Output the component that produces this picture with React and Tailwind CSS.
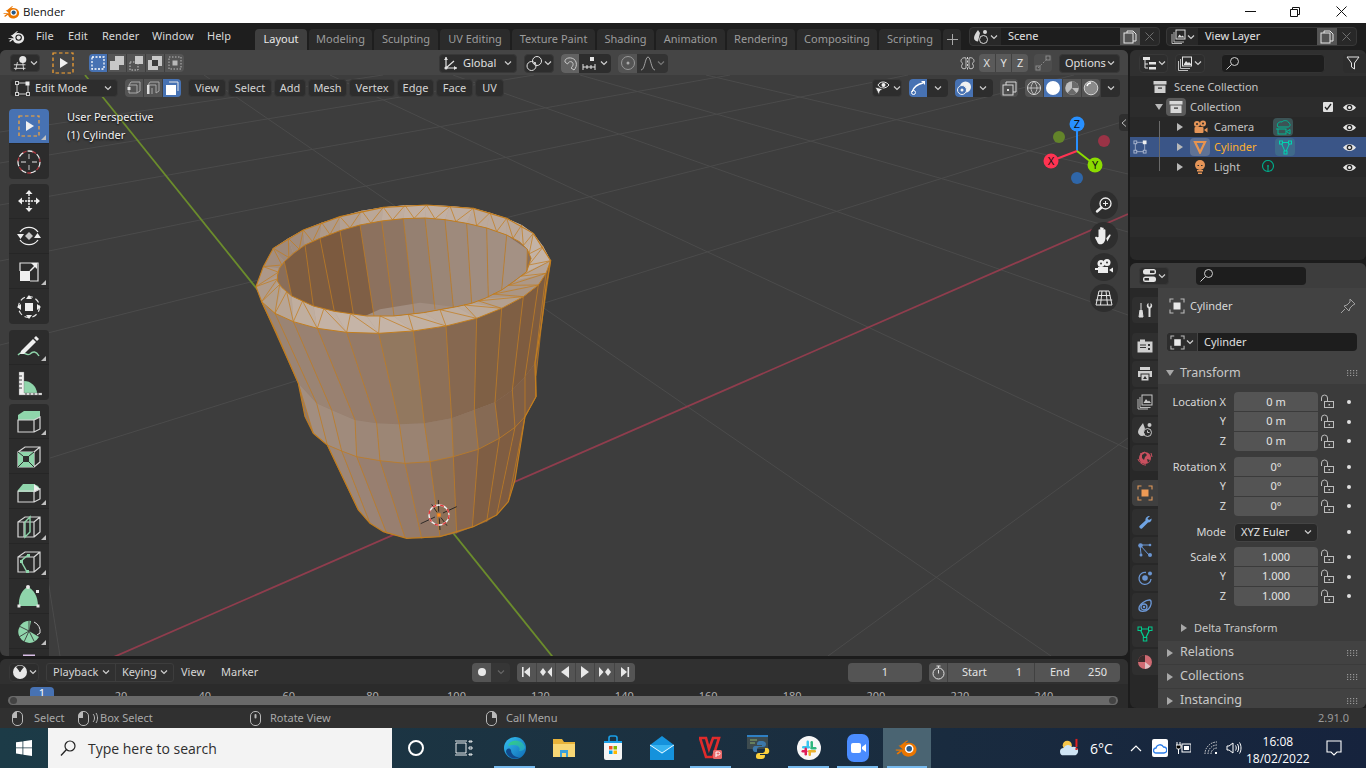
import React from "react";

const Chev = ({ c = "#cfcfcf" }) => (
  <svg width="8" height="8" viewBox="0 0 8 8"><path d="M1 2.5L4 5.5L7 2.5" stroke={c} strokeWidth="1.2" fill="none" /></svg>
);
const I = ({ s = 16, v = 16, children, className = "" }) => (
  <svg width={s} height={s} viewBox={`0 0 ${v} ${v}`} fill="none" className={className}>{children}</svg>
);
const W = "#e4e4e4";

const BlenderLogo = ({ s = 18, c = "#ea7600", blue = "#265787", mono = false }) => (
  <svg width={s} height={s} viewBox="0 0 24 24">
    <path d="M1 13.5l7 0L3.5 9.5h1.8L11 5c1.2-.9 2.6-.7 2-.1L10 7.2c4-1.2 9-.6 11 3.8 1.7 4-.8 8.7-6 9.6-4.200.7-7.700-1.500-8.300-5L3.500 18c-1.400.9-2.400-.5-1.200-1.300L5 14.800 1.700 14.800C.5 14.800.3 13.500 1 13.500z" fill={c} />
    <circle cx="14.2" cy="12.800" r="4.300" fill={mono ? "#1d1d1d" : "#fff"} />
    <circle cx="14.200" cy="12.800" r="2.800" fill={mono ? "#e6e6e6" : blue} />
  </svg>
);

const SelectTool = () => (
  <I s={22} v={22}>
    <rect x="1" y="1" width="20" height="20" stroke="#ffa733" strokeWidth="1.200" strokeDasharray="3.500 2.500" />
    <path d="M8 6v10l8-5z" fill="#f0f0f0" />
  </I>
);
const SelMode = ({ k }) => (
  <I s={16} v={16}>
    {k === 0 && <rect x="2" y="2" width="12" height="12" stroke="#fff" strokeWidth="1.300" strokeDasharray="2 1.500" />}
    {k === 1 && <><rect x="6" y="1" width="9" height="9" fill="#c8c8c8" /><rect x="1" y="6" width="9" height="9" fill="#c8c8c8" /></>}
    {k === 2 && <><rect x="7" y="1" width="8" height="8" fill="#c8c8c8" /><rect x="2" y="7" width="8" height="8" stroke="#c8c8c8" strokeDasharray="1.500 1.500" /></>}
    {k === 3 && <><path d="M5 1h10v10H5zM1 5h10v10H1z" fill="#c8c8c8" /><rect x="5" y="5" width="6" height="6" fill="#3b3b3b" /></>}
    {k === 4 && <><rect x="2" y="2" width="12" height="12" stroke="#b8b8b8" strokeDasharray="1.500 1.500" /><rect x="5.500" y="5.500" width="5" height="5" fill="#b8b8b8" /></>}
  </I>
);
const EditModeIcon = () => (
  <I s={15} v={15}>
    <path d="M2 2h11v11H2z" stroke="#cfcfcf" />
    <g fill="#2b2b2b" stroke="#cfcfcf"><rect x="0.500" y="0.500" width="3" height="3" /><rect x="0.500" y="11.500" width="3" height="3" /><rect x="11.500" y="11.500" width="3" height="3" /></g>
    <rect x="10.500" y="0.500" width="4" height="4" fill="#eee" />
  </I>
);
const MeshMode = ({ k }) => (
  <I s={16} v={16}>
    {k === 0 && <><path d="M3 5h8v8H3zM3 5l2-3h9v9l-3 2" stroke="#a8a8a8" /><rect x="1.500" y="7" width="3" height="3" fill="#ddd" /></>}
    {k === 1 && <><path d="M3 5h8v8M3 5l2-3h9v9l-3 2" stroke="#a8a8a8" /><rect x="2" y="5" width="2.500" height="9" fill="#ddd" /><path d="M7 8v6" stroke="#a8a8a8" /></>}
    {k === 2 && <><path d="M5 2h9v9" stroke="#e8e8e8" /><rect x="2" y="5" width="10" height="10" fill="#fff" /></>}
  </I>
);
const GlobalIcon = () => (
  <I s={15} v={15}><path d="M3 1v11h11M3 12l8-7" stroke={W} strokeWidth="1.200" /><circle cx="3" cy="12" r="1.600" fill={W} /><path d="M3 1L1 4h4zM14 12l-3-2v4z" fill={W} /></I>
);
const PivotIcon = () => (
  <I s={17} v={17}><circle cx="5.500" cy="11" r="4.500" stroke={W} /><circle cx="11" cy="6" r="4.500" stroke={W} /><circle cx="9" cy="8" r="1" fill={W} /></I>
);
const MagnetIcon = () => (
  <I s={16} v={16}><path d="M3 7c-1-5 9-6 11 0 1 3 0 6-2 8l-3-2c2-2 3-4 1-6-2-1-3.500 0-4.500 2z" stroke="#c9c9c9" /></I>
);
const SnapIncr = () => (
  <I s={16} v={16}><path d="M1 9v6M5 10v4M9 10v4M13 9v6M1 12h12" stroke={W} /><rect x="8" y="2" width="4" height="4" fill={W} /></I>
);
const PropIcon = () => (
  <I s={16} v={16}><circle cx="8" cy="8" r="6.500" stroke="#999" /><circle cx="8" cy="8" r="1.500" fill="#aaa" /></I>
);
const FalloffIcon = () => (
  <I s={16} v={16}><path d="M1 15c4 0 4-13 7-13s3 13 7 13" stroke="#a0a0a0" /></I>
);
const MirrorIcon = () => (
  <I s={15} v={15}>
    <path d="M7.500 1v13" stroke="#d0d0d0" strokeDasharray="2 1.500" />
    <path d="M6 2C3 1 1 3 1 5c0 1 1 2 2 2.500C2 8 1 10 2 12c1 1 3 1 4 0zM9 2c3-1 5 1 5 3 0 1-1 2-2 2.500 1 .5 2 2.500 1 4.500-1 1-3 1-4 0z" stroke="#d0d0d0" strokeWidth=".9" />
  </I>
);
const SnapBox = () => (
  <I s={16} v={16}><path d="M3 13L13 3" stroke="#8a8a8a" strokeDasharray="2 1.500" /><rect x="1" y="11" width="4" height="4" stroke="#8a8a8a" /><rect x="11" y="1" width="4" height="4" stroke="#8a8a8a" /></I>
);
const VisIcon = () => (
  <I s={18} v={18}>
    <path d="M4 6c2-4 8-4 11 0-3 4-9 4-11 0z" stroke="#efefef" />
    <circle cx="9.500" cy="6" r="2" fill="#efefef" />
    <path d="M1 8l8 2-3 2-1 4z" fill="#efefef" stroke="#2b2b2b" strokeWidth=".8" />
  </I>
);
const GizmoIcon = () => (
  <I s={16} v={16}><path d="M2 12C4 6 8 4 13 3" stroke="#fff" strokeWidth="1.300" /><circle cx="3.500" cy="12.500" r="2" stroke="#fff" /><path d="M11 1h4v4z" fill="#fff" /></I>
);
const OverlayIcon = () => (
  <I s={16} v={16}><circle cx="9.500" cy="7" r="5.500" fill="#f2f2f2" /><circle cx="6" cy="10" r="4.500" stroke="#f2f2f2" fill="#4772b3" /><circle cx="6" cy="10" r="1.500" fill="#f2f2f2" /></I>
);
const XrayIcon = () => (
  <I s={15} v={15}><path d="M4 4V1h10v10h-3" stroke="#d8d8d8" /><rect x="1" y="4" width="10" height="10" stroke="#d8d8d8" /><rect x="5" y="8" width="2" height="2" fill="#d8d8d8" /></I>
);
const ShadeIcon = ({ k }) => (
  <I s={16} v={16}>
    {k === 0 && <><circle cx="8" cy="8" r="6.500" stroke="#d5d5d5" /><path d="M1.500 8h13M8 1.500c-4 4-4 9 0 13M8 1.500c4 4 4 9 0 13" stroke="#d5d5d5" strokeWidth=".8" /></>}
    {k === 1 && <circle cx="8" cy="8" r="7" fill="#fff" />}
    {k === 2 && <><circle cx="8" cy="8" r="6.800" fill="#bdbdbd" /><path d="M8 8V1.200a6.800 6.800 0 0 1 6.800 6.800zM8 8l4.500 5a6.800 6.800 0 0 1-9 0z" fill="#6a6a6a" /></>}
    {k === 3 && <><circle cx="8" cy="8" r="6.800" fill="#8a8a8a" stroke="#d5d5d5" /><path d="M4 6a4 4 0 0 1 4-3" stroke="#fff" strokeWidth="1.400" /></>}
  </I>
);

/* toolbar icons */
const G = "#8fd5ab";
const boxPath = "M2 9h16v15H2zM2 9l7-5h15v15l-6 5M18 9l6-5";
const ToolIcon = ({ k }) => {
  const st = { stroke: "#d8d8d8", strokeWidth: 1.200 };
  return (
    <I s={26} v={26}>
      {k === "cursor" && <>
        <circle cx="13" cy="13" r="11" stroke="#e8e8e8" strokeWidth="1.300" strokeDasharray="6 4" />
        <circle cx="13" cy="13" r="11" stroke="#b03a42" strokeWidth="1.300" strokeDasharray="4 6" strokeDashoffset="5" />
        <path d="M13 5v5M13 16v5M5 13h5M16 13h5" stroke="#a8a8a8" strokeWidth="1.300" />
      </>}
      {k === "move" && <>
        <path d="M13 2l-3.500 4h7zM13 24l-3.500-4h7zM2 13l4-3.500v7zM24 13l-4-3.500v7z" fill="#efefef" />
        <path d="M13 6v5M13 15v5M6 13h5M15 13h5" stroke="#efefef" strokeWidth="1.400" strokeDasharray="2 1" />
        <circle cx="13" cy="13" r="1.400" fill="#efefef" />
      </>}
      {k === "rotate" && <>
        <path d="M4 9a11 11 0 0 1 18 0M22 17a11 11 0 0 1-18 0" stroke="#efefef" strokeWidth="1.300" />
        <path d="M1 11h7l-3.500 5zM25 15h-7l3.500-5z" fill="#efefef" />
        <path d="M13 9l4 4-4 4-4-4z" fill="#c8c8c8" />
      </>}
      {k === "scale" && <>
        <rect x="4" y="13" width="10" height="10" fill="#efefef" />
        <path d="M4 13V5h18v18h-8" stroke="#e4e4e4" strokeWidth="1.200" />
        <path d="M14 13l6-6" stroke="#efefef" strokeWidth="1.400" /><path d="M21 5v6l-6-6z" fill="#efefef" />
      </>}
      {k === "transform" && <>
        <circle cx="13" cy="13" r="10.500" stroke="#e4e4e4" strokeWidth="1.200" strokeDasharray="5 3" />
        <rect x="9" y="9" width="8" height="8" fill="#efefef" />
        <path d="M13 1l-3 4h6zM13 25l-3-4h6zM1 13l4-3v6zM25 13l-4-3v6z" fill="#efefef" />
      </>}
      {k === "annotate" && <>
        <path d="M2 21c5-6 8 2 12-1 3-3 6-3 9 2" stroke={G} strokeWidth="1.400" />
        <path d="M5 17L17 5l3 3L8 20H4z" fill="#efefef" />
        <path d="M18 4l2-2 3 3-2 2z" fill="#efefef" />
      </>}
      {k === "measure" && <>
        <path d="M8 11a13 13 0 0 1 13 12H8z" fill={G} />
        <path d="M3 2h5v21h18v2H3z" fill="#efefef" stroke="#777" strokeWidth=".4" />
        <path d="M3 6h3M3 10h3M3 14h3M3 18h3M10 25v-2M14 25v-2M18 25v-2M22 25v-2" stroke="#444" />
      </>}
      {k === "extrude" && <>
        <path d="M2 7l6-4h16v6l-6 3H2z" fill={G} /><path d="M2 12h16v12H2zM18 12l6-3v12l-6 3" {...st} />
      </>}
      {k === "inset" && <>
        <path d={boxPath} {...st} />
        <path d="M2 9h16v15H2z" fill={G} /><rect x="7" y="13" width="6" height="6" fill="#2f2f2f" />
        <path d="M2 9l5 4M18 9l-5 4M2 24l5-5M18 24l-5-5" stroke="#2f2f2f" />
      </>}
      {k === "bevel" && <>
        <path d="M2 12l5-6h11l4 2 2 3-6 3H2z" fill={G} /><path d="M18 6l6 5-6 3z" fill="#efefef" />
        <path d="M2 13h16v11H2zM18 14l6-3v10l-6 3" {...st} />
      </>}
      {k === "loop" && <>
        <path d="M2 9h16v15H2zM2 9l7-5h15v15l-6 5M18 9l6-5M8 9v15" {...st} />
        <path d="M9 9l5-5v15l-5 5z" fill="none" stroke={G} strokeWidth="1.400" />
      </>}
      {k === "knife" && <>
        <path d={boxPath} {...st} />
        <path d="M5 13l6 11M5 13l7-6" stroke={G} strokeWidth="1.500" />
        <rect x="4" y="12" width="3" height="3" fill={G} /><rect x="11" y="6" width="3" height="3" fill={G} /><rect x="10" y="22" width="3" height="3" fill={G} />
      </>}
      {k === "poly" && <>
        <path d="M3 23c-1-8 3-17 9-19 5 2 10 9 10 19z" fill={G} />
        <circle cx="12" cy="4" r="2" fill="#e8e8e8" />
        <rect x="1.500" y="21.500" width="3" height="3" fill="#e8e8e8" /><rect x="20.500" y="21.500" width="3" height="3" fill="#e8e8e8" /><rect x="20" y="7" width="3" height="3" fill="#e8e8e8" />
      </>}
      {k === "spin" && <>
        <path d="M13 13L15 3A11 11 0 1 0 23 19z" fill={G} />
        <path d="M13 13L3 8M13 13L3 19M13 13L8 24M13 13l5 10M13 13V2" stroke="#3a3a3a" strokeWidth=".9" />
        <path d="M18 4a10 10 0 0 1 6 11l-3 2" stroke="#e4e4e4" />
      </>}
      {k === "smooth" && <path d="M7 1.500h12" stroke="#d9bfe6" strokeWidth="2" />}
    </I>
  );
};
const Corner = () => <span className="absolute bottom-[3px] right-[3px] h-0 w-0 border-b-[5px] border-l-[5px] border-b-[#c0c0c0] border-l-transparent" />;

const Tool = ({ k, corner, active }) => (
  <div className={`relative flex h-[35px] w-[40px] items-center justify-center border-b border-[#262626] last:border-b-0 ${active ? "bg-[#4772b3]" : "bg-[#2c2c2c]"}`}>
    {k === "select" ? <SelectTool /> : <ToolIcon k={k} />}
    {corner && <Corner />}
  </div>
);
const ToolGroup = ({ className = "", children }) => (
  <div className={`w-[40px] overflow-hidden rounded-[4px] ${className}`}>{children}</div>
);

/* mesh */
const outer = [[48,290],[70,230],[100,175],[145,145],[190,120],[245,98],[300,80],[365,62],[430,52],[495,46],[560,45],[630,48],[700,55],[750,68],[800,85],[845,105],[880,130],[910,170],[932,212],[918,250],[895,285],[850,320],[785,355],[710,385],[618,408],[520,423],[416,430],[320,427],[232,415],[160,395],[105,370],[65,335]];
const inner = [[112,258],[118,235],[133,215],[160,190],[195,165],[240,145],[300,122],[360,105],[425,93],[490,86],[555,84],[615,89],[680,100],[740,114],[800,135],[838,155],[862,178],[873,205],[860,245],[825,272],[785,300],[735,325],[695,340],[650,350],[550,368],[460,378],[380,378],[283,364],[220,348],[155,318],[125,292],[113,275]];
const rimCol = ["#ad9889","#a48e7e","#a08a7a","#a28c7c","#a89383","#ae9a8a","#b4a091","#baa798","#c0ad9f","#c2b0a3","#c2b0a3","#c0aea1","#bca99b","#bca99b","#bba89a","#c0ae9f","#c4b3a6","#c4b3a6","#b7a495","#ad9887","#ab9685","#b3a090","#bcaa9b","#c0ae9f","#c2b1a3","#c5b4a7","#c5b4a7","#c4b2a5","#c0ae9f","#b8a595","#b2a08f","#b09c8c"];
const R0 = [[65,335],[105,370],[160,395],[232,415],[320,427],[416,430],[520,423],[618,408],[710,385],[785,355],[850,320],[895,285],[918,250],[932,212]];
const R1 = [[175,580],[230,640],[275,660],[345,690],[410,700],[478,703],[553,700],[635,685],[703,660],[765,637],[817,600],[855,560],[885,520],[905,400]];
const R2 = [[220,730],[262,765],[305,783],[350,800],[420,812],[495,820],[570,815],[640,800],[715,778],[778,745],[825,712],[855,680],[888,620],[888,560]];
const R2b = R2.slice(1, 12);
const R3 = [[355,960],[390,1000],[440,1030],[495,1043],[545,1045],[600,1040],[650,1030],[697,1012],[740,995],[770,975],[805,935]];
const upC = ["#9a8474","#9a8474","#998171","#967d6c","#947a68","#92785f","#8d7058","#866850","#7f6045","#7f5f44","#7e5c40","#7e5c40","#7e5c40"];
const bandC = ["#a28e80","#a28d7e","#a08b7c","#9d8778","#9c8675","#9a8372","#957c68","#8e735d","#866a54","#7f5f46","#7f5f46","#7f5d42","#7f5d42"];
const lowC = ["#9d8778","#9b8476","#987f70","#947b6b","#917767","#8d7058","#866650","#7f5e44","#7f5d42","#7e5b40"];
const pts = (a) => a.map((p) => p.join(",")).join(" ");
const strip = (A, B, cols) => cols.map((c, i) => <polygon key={i} points={pts([A[i], A[i + 1], B[i + 1], B[i]])} fill={c} />);
const lines = (A, B) => A.map((p, i) => <line key={i} x1={p[0]} y1={p[1]} x2={B[i][0]} y2={B[i][1]} />);
const inTop = [[133,215],[195,165],[240,145],[300,122],[360,105],[425,93],[490,86],[555,84],[615,89],[680,100],[740,114],[800,135],[862,178]];
const inBot = [[155,318],[220,348],[283,364],[340,372],[402,378],[462,378],[522,372],[585,358],[640,352],[695,340],[745,322],[785,300],[860,245]];
const inC = ["#7c5c42","#7d5c41","#7c5a3f","#7f5f46","#8c715e","#8e7563","#958071","#9a8677","#9e8a7c","#a08d80","#a28f82","#a49184"];
const silhouette = "48,290 70,230 100,175 190,120 300,80 430,52 560,45 700,55 800,85 880,130 932,212 918,290 905,400 885,520 888,620 855,680 825,870 805,935 770,975 700,1010 600,1040 500,1045 430,1025 390,1000 355,960 262,765 220,730 195,680 175,580 110,430 65,335";

const Mesh = () => {
  const mid = (i) => {
    const a = inner[i], b = inner[(i + 1) % 32];
    return [(a[0] + b[0]) / 2, (a[1] + b[1]) / 2];
  };
  return (
    <g transform="translate(240 190) scale(.33333)">
      <polygon points={silhouette} fill="#927a68" />
      <polygon points="825,712 855,680 825,870 805,935" fill="#7e5b40" />
      {strip(R0, R1, upC)}
      {strip(R1, R2, bandC)}
      {strip(R2b, R3, lowC)}
      <polygon points={pts(outer)} fill="#b5a193" />
      {outer.map((p, i) => {
        const n = outer[(i + 1) % 32];
        return <polygon key={i} points={pts([p, n, inner[(i + 1) % 32], inner[i]])} fill={rimCol[i]} />;
      })}
      <polygon points={pts(inner)} fill="#8a6e59" />
      {strip(inTop, inBot, inC)}
      <polygon points="375,378 420,358 540,338 640,350 550,368 460,378" fill="#a18d80" />
      <g stroke="#c27d1e" strokeWidth="2.200" fill="none">
        {lines(R0, R1)}{lines(R1, R2)}{lines(R2b, R3)}{lines(inTop, inBot)}
        {outer.map((p, i) => {
          const m = mid(i), n = outer[(i + 1) % 32];
          return <polyline key={i} points={`${p[0]},${p[1]} ${m[0]},${m[1]} ${n[0]},${n[1]}`} />;
        })}
        <polygon points={pts(inner)} strokeWidth="3" />
        <polyline points={pts(R2)} />
        <polyline points={pts(R0)} strokeWidth="3" />
        <polygon points={silhouette} strokeWidth="3.500" />
      </g>
      <g transform="translate(597 975)">
        <path d="M-55 26L-12 6M12-6L53-25M-22-32L-6-8M6 8L24 32M-2-45L-1-10M1 10L3 45" stroke="#1a1a1a" strokeWidth="2.500" />
        <circle r="30" fill="none" stroke="#f2f2f2" strokeWidth="4" />
        <circle r="30" fill="none" stroke="#e03535" strokeWidth="4" strokeDasharray="12 12" />
        <rect x="-5" y="-5" width="10" height="10" fill="#ff8a1c" />
      </g>
    </g>
  );
};

const Viewport3D = () => {
  const gridL = [
    [0,132,383,75],[0,163,534,75],[0,205,730,75],[0,261,908,75],[0,345,1074,75],[50,458,1128,120],
    [204,75,1051,656],[330,75,1128,449],[453,75,1128,315],[580,75,1128,232],[706,75,1128,174],[828,656,1128,438],[48,580,60,656],
  ];
  return (
    <svg width="1128" height="606" viewBox="0 50 1128 606" className="absolute left-0 top-0">
      <g stroke="#4b4b4b" strokeWidth="1">
        {gridL.map((l, i) => <line key={i} x1={l[0]} y1={l[1]} x2={l[2]} y2={l[3]} />)}
      </g>
      <line x1="85" y1="75" x2="560" y2="666" stroke="#6b8c2c" strokeWidth="1.800" />
      <line x1="100" y1="663" x2="1128" y2="214" stroke="#8f3d4d" strokeWidth="1.800" />
      <Mesh />
      <circle cx="1104" cy="141" r="6" fill="#9a3346" />
      <circle cx="1059" cy="137" r="6" fill="#63842a" />
      <circle cx="1077" cy="178" r="6" fill="#2f66a8" />
      <path d="M1077 151V124" stroke="#2890ff" strokeWidth="2" />
      <path d="M1077 151L1051 161" stroke="#ff3352" strokeWidth="2" />
      <path d="M1077 151L1095 165" stroke="#8bdc00" strokeWidth="2" />
      <circle cx="1077" cy="124" r="7.500" fill="#2890ff" />
      <circle cx="1051" cy="161" r="7.500" fill="#ff3352" />
      <circle cx="1095" cy="165" r="7.500" fill="#8bdc00" />
      <g fontSize="11" fill="#111" textAnchor="middle" fontFamily="Noto Sans">
        <text x="1077" y="128">Z</text><text x="1051" y="165">X</text><text x="1095" y="169">Y</text>
      </g>
    </svg>
  );
};

const NavBtn = ({ children }) => (
  <div className="mb-[3px] flex h-[28px] w-[28px] items-center justify-center rounded-full bg-[#2e2e2e]">{children}</div>
);

const D = "bg-[#2d2d2d] rounded-[4px] border border-[#383838]";
const Menu = ({ w, t }) => <div className={`flex h-[18px] items-center justify-center text-[#d4d4d4] ${D} ${w}`}>{t}</div>;

const ViewHeader = () => (
  <div className="absolute left-0 top-0 w-full">
    <div className="flex h-[25px] items-center bg-[#474747]/80 pl-[10px] pr-[8px] pt-[1px]">
      <div className={`flex h-[18px] w-[30px] items-center justify-center gap-px ${D}`}><I s={16} v={18}><path d="M1 11h13M1 15h13M5 8l-2 9M11 8l1 9" stroke={W} /><circle cx="11" cy="5" r="4" fill={W} /></I><Chev /></div>
      <div className="ml-[12px] flex h-[22px] w-[22px] items-center justify-center"><SelectTool /></div>
      <div className="ml-[15px] flex h-[18px] w-[95px] overflow-hidden rounded-[4px] bg-[#545454]">
        {[0,1,2,3,4].map((k) => (
          <div key={k} className={`flex w-[19px] items-center justify-center border-r border-[#3f3f3f] last:border-r-0 ${k === 0 ? "bg-[#4772b3]" : ""}`}><SelMode k={k} /></div>
        ))}
      </div>
      <div className={`ml-[255px] flex h-[19px] w-[78px] items-center pr-[4px] ${D}`}>
        <span className="ml-[3px] mr-[5px]"><GlobalIcon /></span><span className="flex-1 text-[#e0e0e0]">Global</span><Chev />
      </div>
      <div className={`ml-[7px] flex h-[19px] w-[30px] items-center justify-center gap-[1px] ${D}`}><PivotIcon /><Chev /></div>
      <div className="ml-[7px] flex h-[19px] w-[50px] overflow-hidden rounded-[4px] bg-[#2d2d2d]">
        <div className="flex w-[18px] items-center justify-center bg-[#626262]"><MagnetIcon /></div>
        <div className="flex flex-1 items-center justify-center gap-[2px]"><SnapIncr /><Chev /></div>
      </div>
      <div className="ml-[7px] flex h-[19px] w-[50px] overflow-hidden rounded-[4px] bg-[#333333]">
        <div className="flex w-[19px] items-center justify-center bg-[#545454]"><PropIcon /></div>
        <div className="flex flex-1 items-center justify-center gap-[1px]"><FalloffIcon /><Chev c="#777" /></div>
      </div>
      <div className="flex-1" />
      <MirrorIcon />
      <div className="ml-[4px] flex h-[18px] w-[49px] overflow-hidden rounded-[4px] bg-[#5a5a5a] text-[#e2e2e2]">
        {["X","Y","Z"].map((t) => <div key={t} className="flex flex-1 items-center justify-center border-r border-[#414141] last:border-r-0">{t}</div>)}
      </div>
      <div className="ml-[6px] flex h-[18px] w-[18px] items-center justify-center rounded-[4px] bg-[#4d4d4d]"><SnapBox /></div>
      <div className={`ml-[7px] flex h-[19px] w-[61px] items-center justify-between pl-[5px] pr-[4px] text-[#e0e0e0] ${D}`}>Options<Chev /></div>
    </div>
    <div className="flex h-[25px] items-center pl-[10px] pr-[8px] pt-[1px]">
      <div className={`flex h-[18px] w-[108px] items-center pr-[5px] ${D}`}>
        <span className="ml-[4px] mr-[5px]"><EditModeIcon /></span><span className="flex-1 text-[#dcdcdc]">Edit Mode</span><Chev />
      </div>
      <div className="ml-[7px] flex h-[18px] w-[56px] overflow-hidden rounded-[4px] bg-[#545454]">
        {[0,1,2].map((k) => <div key={k} className={`flex flex-1 items-center justify-center border-r border-[#3f3f3f] last:border-r-0 ${k === 2 ? "bg-[#4772b3]" : ""}`}><MeshMode k={k} /></div>)}
      </div>
      <div className="ml-[7px] flex gap-[2px]">
        <Menu w="w-[38px]" t="View" /><Menu w="w-[44px]" t="Select" /><Menu w="w-[32px]" t="Add" /><Menu w="w-[39px]" t="Mesh" />
        <Menu w="w-[46px]" t="Vertex" /><Menu w="w-[37px]" t="Edge" /><Menu w="w-[37px]" t="Face" /><Menu w="w-[29px]" t="UV" />
      </div>
      <div className="flex-1" />
      <div className={`flex h-[18px] w-[30px] items-center justify-center gap-[1px] ${D}`}><VisIcon /><Chev /></div>
      <div className="ml-[7px] flex h-[18px] w-[39px] overflow-hidden rounded-[4px] bg-[#2d2d2d]">
        <div className="flex w-[18px] items-center justify-center bg-[#4772b3]"><GizmoIcon /></div><div className="flex flex-1 items-center justify-center"><Chev /></div>
      </div>
      <div className="ml-[7px] flex h-[18px] w-[38px] overflow-hidden rounded-[4px] bg-[#2d2d2d]">
        <div className="flex w-[18px] items-center justify-center bg-[#4772b3]"><OverlayIcon /></div><div className="flex flex-1 items-center justify-center"><Chev /></div>
      </div>
      <div className="ml-[7px] flex h-[18px] w-[18px] items-center justify-center rounded-[4px] bg-[#4d4d4d]"><XrayIcon /></div>
      <div className="ml-[7px] flex h-[18px] w-[75px] overflow-hidden rounded-[4px] bg-[#545454]">
        {[0,1,2,3].map((k) => <div key={k} className={`flex flex-1 items-center justify-center border-r border-[#3f3f3f] last:border-r-0 ${k === 1 ? "bg-[#4772b3]" : ""}`}><ShadeIcon k={k} /></div>)}
      </div>
      <div className="ml-px flex h-[18px] w-[19px] items-center justify-center rounded-r-[4px] bg-[#2d2d2d]"><Chev /></div>
    </div>
  </div>
);

const Viewport = () => (
  <div className="relative h-[606px] overflow-hidden rounded-[6px] bg-[#3d3d3d]">
    <Viewport3D />
    <ViewHeader />
    <div className="absolute left-[9px] top-[59px]">
      <ToolGroup><Tool k="select" corner active /><Tool k="cursor" /></ToolGroup>
      <ToolGroup className="mt-[5px]"><Tool k="move" /><Tool k="rotate" /><Tool k="scale" corner /><Tool k="transform" /></ToolGroup>
      <ToolGroup className="mt-[6px]"><Tool k="annotate" corner /><Tool k="measure" /></ToolGroup>
      <ToolGroup className="mt-[4px]"><Tool k="extrude" corner /><Tool k="inset" /><Tool k="bevel" corner /><Tool k="loop" corner /><Tool k="knife" corner /><Tool k="poly" /><Tool k="spin" corner /><Tool k="smooth" /></ToolGroup>
    </div>
    <div className="absolute left-[67px] top-[58px] leading-[18px] text-[#f2f2f2] [text-shadow:0_1px_2px_#000]">
      <div>User Perspective</div><div>(1) Cylinder</div>
    </div>
    <div className="absolute right-[0px] top-[64px] flex h-[17px] w-[9px] items-center justify-center rounded-l-[4px] bg-[#2e2e2e]">
      <svg width="6" height="8" viewBox="0 0 6 8"><path d="M5 .5L1 4l4 3.500" stroke="#bbb" fill="none" /></svg>
    </div>
    <div className="absolute left-[1090px] top-[141px]">
      <NavBtn><I s={20} v={20}><circle cx="11.500" cy="8.500" r="5.500" stroke="#eee" strokeWidth="1.300" /><path d="M11.500 6v5M9 8.500h5" stroke="#eee" /><path d="M7.500 12.500L3 16.500" stroke="#eee" strokeWidth="2.400" strokeLinecap="round" /></I></NavBtn>
      <NavBtn><I s={22} v={20}><path d="M5 11V4.500c0-1 1.500-1 1.500 0V9V2.500c0-1 1.600-1 1.600 0V9V3c0-1 1.600-1 1.600 0v6V4.500c0-1 1.600-1 1.600 0v7c0 3-1.700 6-4.500 6S4.500 16 2 12c-.6-1 1-1.800 1.800-.8z" fill="#eeeeee" /><path d="M12 12l2.500-3c.8-1 2-.2 1.400.8L13 15z" fill="#eeeeee" /></I></NavBtn>
      <NavBtn><I s={20} v={20}><circle cx="7" cy="6.500" r="3.500" fill="#eee" /><circle cx="13" cy="5.500" r="3.500" fill="#eee" /><circle cx="7" cy="6.500" r="1" fill="#333" /><circle cx="13" cy="5.500" r="1" fill="#333" /><rect x="4" y="10" width="10" height="6" fill="#eee" /><path d="M15 13l4-2.500v5zM1 11h3v2H1z" fill="#eee" /></I></NavBtn>
      <NavBtn><I s={20} v={20}><path d="M5 3h10l3 14H2zM1.800 12h16.400M3.800 7.500h12.400M8 3l-1.500 14M12 3l1.500 14" stroke="#e8e8e8" /></I></NavBtn>
    </div>
  </div>
);

/* timeline */
const TlBtn = ({ k }) => (
  <div className="flex w-[19.600px] items-center justify-center border-r border-[#444] bg-[#545454] last:border-r-0">
    <svg width="14" height="12" viewBox="0 0 14 12" fill="#e8e8e8">
      {k === 0 && <><rect x="3" y="1" width="1.600" height="10" /><path d="M11 1v10L5 6z" /></>}
      {k === 1 && <><path d="M4 2l3 4-3 4-3-4zM13 1v10L8.500 6z" /></>}
      {k === 2 && <path d="M11 0v12L3 6z" />}
      {k === 3 && <path d="M3 0v12l8-6z" />}
      {k === 4 && <path d="M1 1v10l4.500-5zM10 2l3 4-3 4-3-4z" />}
      {k === 5 && <><rect x="9.500" y="1" width="1.600" height="10" /><path d="M3 1v10l6-5z" /></>}
    </svg>
  </div>
);
const nums = ["20","40","60","80","100","120","140","160","180","200","220","240"];
const Timeline = () => (
  <div className="relative mt-[3px] h-[49px] overflow-hidden rounded-t-[6px] bg-[#2b2b2b]">
    <div className="flex h-[25px] items-center bg-[#303030] pl-[9px] pt-[1px] text-[#d6d6d6]">
      <div className={`flex h-[19px] w-[30px] items-center justify-center gap-[1px] ${D}`}>
        <I s={16} v={16}><circle cx="8" cy="8" r="7" fill="#e8e8e8" /><path d="M8 8L4 3a6 6 0 0 1 8 0z" fill="#303030" /><path d="M8 8V2" stroke="#303030" /></I><Chev />
      </div>
      <div className="ml-[7px] flex h-[19px] w-[128px] rounded-[3px] border border-[#3d3d3d]">
        <div className="flex w-[69px] items-center justify-between border-r border-[#3d3d3d] pl-[6px] pr-[5px]">Playback<Chev /></div>
        <div className="flex flex-1 items-center justify-between pl-[6px] pr-[5px]">Keying<Chev /></div>
      </div>
      <div className="ml-[7px] w-[40px]">View</div>
      <div className="w-[40px]">Marker</div>
      <div className="ml-[211px] flex h-[19px] w-[38px] overflow-hidden rounded-[4px]">
        <div className="flex w-[19px] items-center justify-center bg-[#545454]"><span className="h-[8px] w-[8px] rounded-full bg-[#e8e8e8]" /></div>
        <div className="flex flex-1 items-center justify-center bg-[#363636]"><Chev c="#666" /></div>
      </div>
      <div className="ml-[7px] flex h-[19px] w-[118px] overflow-hidden rounded-[4px]">{[0,1,2,3,4,5].map((k) => <TlBtn key={k} k={k} />)}</div>
      <div className="ml-[213px] flex h-[19px] w-[74px] items-center justify-center rounded-[4px] bg-[#545454] text-[#e4e4e4]">1</div>
      <div className="ml-[7px] flex h-[19px] w-[191px] overflow-hidden rounded-[4px] bg-[#545454] text-[#e4e4e4]">
        <div className="flex w-[19px] items-center justify-center border-r border-[#414141] bg-[#545454]"><I s={15} v={15}><circle cx="7.500" cy="8.500" r="5.500" stroke="#e0e0e0" /><path d="M7.500 8.500V5M5.500 1h4M7.500 1v2" stroke="#e0e0e0" /></I></div>
        <div className="flex w-[87px] items-center justify-between border-r border-[#414141] pl-[14px] pr-[12px]"><span>Start</span><span>1</span></div>
        <div className="flex flex-1 items-center justify-between pl-[15px] pr-[13px]"><span>End</span><span>250</span></div>
      </div>
    </div>
    <div className="relative h-[12px]">
      <div className="flex pl-[79px] pt-[6px] text-[#b0b0b0]">
        {nums.map((n) => <div key={n} className="w-[83.900px] text-center leading-[12px]">{n}</div>)}
      </div>
      <div className="absolute left-[30px] top-[3px] flex h-[12px] w-[24px] justify-center rounded-t-[4px] bg-[#4772b3] leading-[12px] text-[#fff]">1</div>
    </div>
    <div className="relative z-10 h-[12px] bg-[#2b2b2b]">
      <div className="ml-[8px] flex h-[9px] w-[1110px] items-center justify-between rounded-full bg-[#696969] px-[2px]">
        <span className="h-[7px] w-[7px] rounded-full bg-[#434343]" /><span className="h-[7px] w-[7px] rounded-full bg-[#434343]" />
      </div>
    </div>
  </div>
);

/* outliner */
const Eye = () => (
  <I s={15} v={15}><path d="M1 7.500C4 3 11 3 14 7.500 11 12 4 12 1 7.500z" fill="#e6e6e6" /><circle cx="7.500" cy="7.500" r="2.800" fill="#2a2a2a" /><circle cx="7.500" cy="7.500" r="1.500" fill="#e6e6e6" /></I>
);
const Arrow = ({ down, c = "#b8b8b8" }) => (
  <svg width="8" height="8" viewBox="0 0 8 8"><path d={down ? "M0 1h8L4 7z" : "M1 0v8l6-4z"} fill={c} /></svg>
);
const BoxColl = ({ c = "#d8d8d8" }) => (
  <I s={14} v={14}><rect x="0.500" y="1" width="13" height="3.500" fill={c} /><path d="M1.500 5.500h11V13h-11z" fill={c} /><rect x="5" y="7.500" width="4" height="1.200" fill="#2b2b2b" /></I>
);
const Cam = ({ c = "#e59558" }) => (
  <I s={16} v={16}><circle cx="5" cy="5" r="3" fill={c} /><circle cx="11" cy="4.500" r="3" fill={c} /><rect x="2.500" y="8" width="9" height="6" rx="1" fill={c} /><path d="M12 11l3.500-2.500v5z" fill={c} /><circle cx="5" cy="5" r="1" fill="#2b2b2b" /><circle cx="11" cy="4.500" r="1" fill="#2b2b2b" /></I>
);
const CamOutline = () => (
  <I s={17} v={17}><path d="M3 8c-2-3 1-6 4-5 1-2 6-2 7 1 2 1 1 4-1 4z" stroke="#00b894" /><rect x="3" y="10" width="8" height="5" stroke="#00b894" /><path d="M11.500 12.500l3.500-2v4.500zM1 10h2" stroke="#00b894" /></I>
);
const Outliner = () => (
  <div className="relative h-[210px] overflow-hidden rounded-[6px] bg-[#282828]">
    <div className="flex h-[26px] items-center bg-[#303030] pl-[9px]">
      <div className={`flex h-[19px] w-[31px] items-center justify-center gap-[1px] ${D}`}><I s={15} v={15}><rect x="1" y="1" width="7" height="3" fill={W} /><path d="M3 4v8h3M3 8h3" stroke={W} /><rect x="7" y="6" width="7" height="2.500" fill={W} /><rect x="7" y="11" width="7" height="2.500" fill={W} /></I><Chev /></div>
      <div className={`ml-[7px] flex h-[19px] w-[31px] items-center justify-center gap-[1px] ${D}`}><I s={15} v={15}><rect x="4.500" y="1" width="9" height="9" stroke={W} /><path d="M6 8l2-3 2 2 1-1 2 2v1H6z" fill={W} /><path d="M2.500 3v9.500H12M.500 5v9.500H10" stroke={W} strokeWidth=".8" /></I><Chev /></div>
      <div className="ml-[16px] flex h-[19px] w-[110px] items-center rounded-[4px] border border-[#333] bg-[#1d1d1d] pl-[3px]"><I s={15} v={15}><circle cx="9.500" cy="5.500" r="4" stroke="#d0d0d0" /><path d="M6.500 8.500L1.500 13.500" stroke="#d0d0d0" /></I></div>
      <div className="ml-[18px] flex h-[19px] w-[24px] items-center rounded-l-[4px] bg-[#2d2d2d] pl-[3px]"><I s={14} v={14}><path d="M1 1h12L8.500 7v6L5.500 11V7z" stroke={W} /></I></div>
    </div>
    <div className="mt-px">
      <div className="relative flex h-[20px] items-center bg-[#282828]">
        <span className="ml-[23px]"><BoxColl c="#cfcfcf" /></span><span className="ml-[7px] text-[#c4c4c4]">Scene Collection</span>
      </div>
      <div className="relative flex h-[20px] items-center bg-[#2c2c2c]">
        <span className="ml-[25px]"><Arrow down /></span>
        <span className="ml-[3px] flex h-[18px] w-[20px] items-center justify-center rounded-[4px] bg-[#5a5a5a]"><BoxColl /></span>
        <span className="ml-[4px] text-[#c4c4c4]">Collection</span>
        <span className="absolute left-[193px] flex h-[10px] w-[10px] items-center justify-center rounded-[1px] bg-[#e0e0e0]"><svg width="8" height="8" viewBox="0 0 8 8"><path d="M1 4l2 2.500L7 1" stroke="#222" strokeWidth="1.300" fill="none" /></svg></span>
        <span className="absolute left-[212px]"><Eye /></span>
      </div>
      <div className="relative flex h-[20px] items-center bg-[#282828]">
        <span className="ml-[46px]"><Arrow /></span><span className="ml-[8px]"><Cam /></span><span className="ml-[6px] text-[#c4c4c4]">Camera</span>
        <span className="absolute left-[143px] flex h-[18px] w-[20px] items-center justify-center rounded-[4px] bg-[#3c5355]"><CamOutline /></span>
        <span className="absolute left-[212px]"><Eye /></span>
      </div>
      <div className="relative flex h-[20px] items-center bg-[#3a5587]">
        <span className="absolute left-[3px] flex"><I s={14} v={15}><path d="M2.500 2.500h10v10h-10z" stroke="#aab6cf" strokeWidth=".9" /><rect x="1" y="11" width="3" height="3" fill="#3a5587" stroke="#aab6cf" /><rect x="11" y="11" width="3" height="3" fill="#3a5587" stroke="#aab6cf" /><rect x="1" y="1" width="3" height="3" fill="#3a5587" stroke="#aab6cf" /><rect x="10.500" y="0.500" width="4" height="4" fill="#f0f0f0" /></I></span>
        <span className="ml-[46px]"><Arrow /></span>
        <span className="ml-[6px] flex h-[18px] w-[20px] items-center justify-center rounded-[4px] bg-[#5f7296]"><svg width="14" height="14" viewBox="0 0 14 14"><path d="M2 2h10L7 12.500z" fill="none" stroke="#e8944f" strokeWidth="2.200" /></svg></span>
        <span className="ml-[4px] text-[#ffb02e]">Cylinder</span>
        <span className="absolute left-[145px] flex h-[18px] w-[20px] items-center justify-center rounded-[4px] bg-[#3f6a8a]"><svg width="15" height="15" viewBox="0 0 15 15"><path d="M3 2.500h9L7.500 12.500z" fill="none" stroke="#00d5b0" /><rect x="1.500" y="1" width="3" height="3" fill="#3f6a8a" stroke="#00d5b0" /><rect x="10.500" y="1" width="3" height="3" fill="#3f6a8a" stroke="#00d5b0" /><rect x="6" y="11" width="3" height="3" fill="#3f6a8a" stroke="#00d5b0" /></svg></span>
        <span className="absolute left-[212px]"><Eye /></span>
      </div>
      <div className="relative flex h-[20px] items-center bg-[#282828]">
        <span className="ml-[46px]"><Arrow /></span>
        <span className="ml-[8px]"><I s={16} v={16}><circle cx="8" cy="6" r="5" fill="#e59558" /><rect x="5" y="11" width="6" height="1.500" fill="#e59558" /><rect x="6" y="13.500" width="4" height="1.500" fill="#e59558" /><path d="M5.500 6.500h1.500M9 6.500h1.500" stroke="#2b2b2b" /></I></span>
        <span className="ml-[6px] text-[#c4c4c4]">Light</span>
        <span className="absolute left-[131px]"><I s={14} v={14}><circle cx="7" cy="6" r="5.500" stroke="#00a888" strokeWidth="1.200" /><circle cx="7" cy="6" r="1" fill="#00a888" /><path d="M7 7v5" stroke="#00a888" strokeWidth="1.200" /></I></span>
        <span className="absolute left-[212px]"><Eye /></span>
      </div>
      <div className="h-[20px] bg-[#2c2c2c]" /><div className="h-[20px] bg-[#282828]" /><div className="h-[20px] bg-[#2c2c2c]" /><div className="h-[20px] bg-[#282828]" />
    </div>
    <div className="absolute left-[29px] top-[71px] h-[50px] w-px bg-[#6a6a6a]" />
  </div>
);

/* properties */
const ObjIcon = ({ c = "#e8e8e8", c2 = "#bcbcbc", s = 16 }) => (
  <I s={s} v={16}>
    <rect x="4.500" y="4.500" width="7" height="7" fill={c} />
    <path d="M1 4.500V1h3.500M11.500 1H15v3.500M15 11.500V15h-3.500M4.500 15H1v-3.500" stroke={c2} strokeWidth="1.100" />
  </I>
);
const tabIcons = {
  tool: <I s={16} v={16}><path d="M11.500 1v3l1 1 1-1V1c2 1 2.500 4 0 5.500V15h-2V6.500C9 5 9.500 2 11.500 1z" fill="#dcdcdc" /><path d="M4 1v6M3 8h2l1 7H2z" stroke="#dcdcdc" fill="#dcdcdc" /></I>,
  render: <I s={16} v={16}><rect x="1" y="4" width="14" height="10" stroke="#d0d0d0" fill="#cfcfcf" /><rect x="3" y="1.500" width="5" height="2.500" fill="#cfcfcf" /><path d="M3 7h6M3 9.500h6" stroke="#333" /><rect x="11" y="6" width="2" height="2" fill="#333" /><rect x="11" y="10" width="2" height="2" fill="#333" /></I>,
  output: <I s={16} v={16}><rect x="1" y="5" width="14" height="6" fill="#cfcfcf" /><rect x="3" y="1" width="10" height="3" fill="#cfcfcf" /><rect x="4" y="8" width="8" height="7" fill="#cfcfcf" stroke="#2e2e2e" /><path d="M6 13l2-3 2 3z" fill="#2e2e2e" /></I>,
  layer: <I s={16} v={16}><rect x="5" y="1" width="10" height="10" stroke="#c8c8c8" /><path d="M6.500 9l2.500-4 2 2.500 1-1 2 2.500z" fill="#c8c8c8" /><path d="M3 3v10.500h10.500M1 5v10h10" stroke="#c8c8c8" strokeWidth=".9" /></I>,
  scene: <I s={16} v={16}><path d="M6 1c-2 3-5 6-5 9 0 2 2 4 4 4 1 0 2-.5 3-1.500-2-3-1-5 0-6z" fill="#c8c8c8" /><circle cx="12.500" cy="3" r="2" fill="#c8c8c8" /><circle cx="10.500" cy="10.500" r="4" stroke="#c8c8c8" /><path d="M10.500 8.500v2h2" stroke="#c8c8c8" /></I>,
  world: <I s={16} v={16}><circle cx="8" cy="8" r="6" fill="#c9505f" /><path d="M1 9c1 3 4 6 8 6M14 3l1 4M3 4l5-2" stroke="#c9505f" /><path d="M5 5l3-2 2 2-2 2-1 3-2-2zM10 9l3 1-2 3z" fill="#2f2f2f" /></I>,
  object: <ObjIcon c="#ee9a55" c2="#e39a5a" />,
  modifier: <I s={16} v={16}><path d="M14.500 4.500c.5 2-1 4-3.500 4L5 14.500c-1 1-3.500-1-2.500-2.500l6-5.500C8 4 10.500 1.500 13 2L10.500 4.500 12 6z" fill="#6fa3e2" /></I>,
  particles: <I s={16} v={16}><path d="M3 3l1 9M3 3l9 0M3 3l9 10" stroke="#6b96d3" /><circle cx="3.500" cy="3.500" r="2.300" fill="#6b96d3" /><circle cx="4" cy="13" r="1.500" fill="#6b96d3" /><circle cx="13" cy="13" r="2" fill="#6b96d3" /><circle cx="13" cy="3" r="1.300" fill="#6b96d3" /></I>,
  physics: <I s={16} v={16}><path d="M9 2.500A6 6 0 1 0 14 9" stroke="#6b96d3" strokeWidth="1.300" /><circle cx="8" cy="8" r="2.800" fill="#6b96d3" /><circle cx="13" cy="3.500" r="2" fill="#6b96d3" /></I>,
  constraint: <I s={16} v={16}><path d="M2 10.500c0-4 7-9 11-8.500 2 1 1.500 6-1.500 9-3.500 3.500-9.500 3-9.500-.5z" stroke="#6b96d3" strokeWidth="1.400" /><circle cx="7" cy="9" r="3" stroke="#6b96d3" strokeWidth="1.300" /><circle cx="7" cy="9" r="1.200" fill="#6b96d3" /></I>,
  data: <I s={16} v={16}><path d="M3 3h10L8 13.500z" stroke="#00cc8e" strokeWidth="1.200" /><rect x="1" y="1" width="3.500" height="3.500" fill="#2f2f2f" stroke="#00cc8e" /><rect x="11.500" y="1" width="3.500" height="3.500" fill="#2f2f2f" stroke="#00cc8e" /><rect x="6.300" y="11.500" width="3.500" height="3.500" fill="#2f2f2f" stroke="#00cc8e" /></I>,
  material: <I s={16} v={16}><circle cx="8" cy="8" r="7" fill="#cf6a72" /><path d="M8 8V1A7 7 0 0 0 1 8z" fill="#3a2a2a" /><path d="M8 8l5.500 4.300A7 7 0 0 1 8 15z" fill="#e6e6e6" opacity=".7" /></I>,
};
const Tab = ({ k, active, cls = "mb-[2px]" }) => (
  <div className={`flex h-[26px] w-[26px] items-center justify-center rounded-l-[4px] ${active ? "bg-[#3f3f3f]" : "bg-[#2f2f2f]"} ${cls}`}>{tabIcons[k]}</div>
);
const Lock = () => (
  <I s={15} v={15}><path d="M1.500 7V4a3 3 0 0 1 6 0v3" stroke="#bdbdbd" /><rect x="4.500" y="7.500" width="9" height="6" stroke="#bdbdbd" /><rect x="8.500" y="10" width="1.500" height="1.500" fill="#bdbdbd" /></I>
);
const Dot = () => <span className="h-[4px] w-[4px] rounded-full bg-[#e0e0e0]" />;
const Field = ({ label, val, first, last }) => (
  <div className="flex h-[19.700px] items-center">
    <div className="w-[68px] text-right text-[#d8d8d8]">{label}</div>
    <div className={`ml-[8px] flex h-[19px] w-[84px] items-center justify-center bg-[#545454] text-[#e4e4e4] ${first ? "rounded-t-[4px]" : ""} ${last ? "rounded-b-[4px]" : ""}`}>{val}</div>
    <span className="ml-[2px] flex"><Lock /></span>
    <span className="ml-[12px] flex"><Dot /></span>
  </div>
);
const Grip = () => (
  <svg width="11" height="6" viewBox="0 0 11 6" fill="#9a9a9a">
    {[0,3,6,9].map((x) => <g key={x}><rect x={x} y="0" width="1.200" height="1.200" /><rect x={x} y="2.500" width="1.200" height="1.200" /><rect x={x} y="5" width="1.200" height="1.200" /></g>)}
  </svg>
);
const PanelHead = ({ t }) => (
  <div className="flex h-[23px] items-center bg-[#424242] pl-[8px] pr-[8px] mb-px">
    <Arrow c="#a8a8a8" /><span className="ml-[6px] flex-1 text-[12.500px] text-[#c8c8c8]">{t}</span><Grip />
  </div>
);
const Properties = () => (
  <div className="mt-[3px] h-[445px] overflow-hidden rounded-[6px] bg-[#282828]">
    <div className="flex h-[25px] items-center bg-[#3d3d3d] pl-[9px]">
      <div className={`flex h-[18px] w-[30px] items-center justify-center gap-[1px] ${D}`}><I s={15} v={15}><rect x="1" y="1" width="13" height="5.500" rx="2.500" fill={W} /><rect x="1" y="8.500" width="13" height="5.500" rx="2.500" fill={W} /><rect x="8" y="2.500" width="4.500" height="2.500" fill="#2d2d2d" /><rect x="2.500" y="10" width="4.500" height="2.500" fill="#2d2d2d" /></I><Chev /></div>
      <div className="ml-[27px] flex h-[18px] w-[110px] items-center rounded-[4px] bg-[#1d1d1d] pl-[3px]"><I s={15} v={15}><circle cx="9.500" cy="5.500" r="4" stroke="#d0d0d0" /><path d="M6.500 8.500L1.500 13.500" stroke="#d0d0d0" /></I></div>
    </div>
    <div className="flex h-[420px]">
      <div className="flex w-[28px] flex-col items-end pt-[9px]">
        <Tab k="tool" cls="mb-[10px]" /><Tab k="render" /><Tab k="output" /><Tab k="layer" /><Tab k="scene" /><Tab k="world" cls="mb-[9px]" />
        <Tab k="object" active cls="mb-[3px]" /><Tab k="modifier" /><Tab k="particles" /><Tab k="physics" /><Tab k="constraint" /><Tab k="data" /><Tab k="material" />
      </div>
      <div className="flex-1 overflow-hidden bg-[#3b3b3b] text-[#d8d8d8]">
        <div className="h-[74px] bg-[#424242]">
          <div className="flex h-[36px] items-center pl-[11px] pr-[10px]">
            <ObjIcon /><span className="ml-[5px] flex-1">Cylinder</span>
            <I s={16} v={16}><path d="M10 1l5 5-2 1-3 3-1 3-5-5 3-1 3-3zM5 11l-4 4" stroke="#a0a0a0" /></I>
          </div>
          <div className="ml-[9px] mr-[9px] mt-[9px] flex h-[18px] overflow-hidden rounded-[4px] bg-[#1d1d1d]">
            <div className="flex w-[31px] items-center justify-center gap-[1px] border-r border-[#444] bg-[#2d2d2d]"><ObjIcon s={15} /><Chev /></div>
            <div className="flex items-center pl-[6px] text-[#e0e0e0]">Cylinder</div>
          </div>
        </div>
        <div className="flex h-[22px] items-center bg-[#424242] pl-[8px] pr-[8px]">
          <Arrow down c="#a8a8a8" /><span className="ml-[6px] flex-1 text-[12.500px] text-[#c8c8c8]">Transform</span><Grip />
        </div>
        <div className="h-[257px] pt-[8px]">
          <Field label="Location X" val="0 m" first /><Field label="Y" val="0 m" /><Field label="Z" val="0 m" last />
          <div className="h-[6px]" />
          <Field label="Rotation X" val="0°" first /><Field label="Y" val="0°" /><Field label="Z" val="0°" last />
          <div className="h-[6px]" />
          <div className="flex h-[20px] items-center">
            <div className="w-[68px] text-right">Mode</div>
            <div className="ml-[8px] flex h-[19px] w-[84px] items-center justify-between rounded-[4px] border border-[#444] bg-[#282828] pl-[6px] pr-[5px] text-[#e0e0e0]">XYZ Euler<Chev /></div>
            <span className="ml-[29px] flex"><Dot /></span>
          </div>
          <div className="h-[5px]" />
          <Field label="Scale X" val="1.000" first /><Field label="Y" val="1.000" /><Field label="Z" val="1.000" last />
          <div className="mt-[12px] flex h-[20px] items-center pl-[22px] text-[#c8c8c8]"><Arrow c="#a8a8a8" /><span className="ml-[6px]">Delta Transform</span></div>
        </div>
        <PanelHead t="Relations" /><PanelHead t="Collections" /><PanelHead t="Instancing" />
      </div>
    </div>
  </div>
);

/* status */
const Mouse = ({ k }) => (
  <I s={15} v={15}>
    <rect x="2.500" y="0.500" width="10" height="14" rx="4.500" stroke="#b8b8b8" />
    {k === "l" && <path d="M2.500 7V5a4.500 4.500 0 0 1 4.500-4.500V7z" fill="#b8b8b8" />}
    {k === "r" && <path d="M12.500 7V5a4.500 4.500 0 0 0-4.500-4.500V7z" fill="#b8b8b8" />}
    {k === "m" && <rect x="6.500" y="3" width="2" height="4.500" rx="1" fill="#b8b8b8" />}
  </I>
);
const Status = () => (
  <div className="flex h-[20px] items-center bg-[#303030] text-[#a8a8a8]">
    <span className="ml-[10px] flex"><Mouse k="l" /></span><span className="ml-[9px] w-[42px]">Select</span>
    <Mouse k="l" /><svg width="6" height="12" viewBox="0 0 6 12" className="ml-[1px]"><path d="M1 2c2 2 2 6 0 8M4 1c2 3 2 7 0 10" stroke="#b8b8b8" fill="none" /></svg>
    <span className="ml-[2px] w-[148px]">Box Select</span>
    <Mouse k="m" /><span className="ml-[7px] w-[214px]">Rotate View</span>
    <Mouse k="r" /><span className="ml-[7px]">Call Menu</span>
    <span className="ml-auto mr-[17px] text-[#9a9a9a]">2.91.0</span>
  </div>
);

/* taskbar */
const TB = ({ u, children, bg = "", w = "w-[49px]" }) => (
  <div className={`relative flex h-[40px] shrink-0 items-center justify-center ${w} ${bg}`}>
    {children}
    {u && <span className="absolute bottom-0 left-[4px] right-[4px] h-[2px] bg-[#76b9ed]" />}
  </div>
);
const Taskbar = () => (
  <div className="flex h-[40px] items-center bg-gradient-to-r from-[#1c3b47] via-[#1b3040] to-[#16233d] font-['Open_Sans',sans-serif] text-white">
    <div className="flex h-[40px] w-[48px] items-center justify-center">
      <svg width="16" height="16" viewBox="0 0 16 16" fill="#fff"><path d="M0 2.300L6.500 1.400V7.500H0zM7.300 1.300L16 0V7.500H7.300zM0 8.300H6.500V14.500L0 13.600zM7.300 8.300H16V16L7.300 14.700z" /></svg>
    </div>
    <div className="flex h-[40px] w-[344px] items-center bg-[#f3f3f3] pl-[12px] text-[14px] text-[#2e2e2e]">
      <svg width="16" height="17" viewBox="0 0 16 17" fill="none"><circle cx="10" cy="6" r="5" stroke="#222" strokeWidth="1.200" /><path d="M6.500 9.500L1 15.500" stroke="#222" strokeWidth="1.300" /></svg>
      <span className="ml-[12px]">Type here to search</span>
    </div>
    <TB w="w-[48px]"><span className="h-[16px] w-[16px] rounded-full border-[2.500px] border-white" /></TB>
    <TB w="w-[48px]"><svg width="18" height="16" viewBox="0 0 18 16" fill="none"><path d="M1 3h10v10H1zM0 1h12M0 15h12M14 1h3v1h-3zM14 7h3v2h-3zM14 14h3v1h-3z" stroke="#fff" strokeWidth=".9" /></svg></TB>
    <div className="ml-[2px] flex">
      <TB u>
        <svg width="24" height="26" viewBox="0 0 24 24">
          <defs><linearGradient id="edA" x1="0" y1="0" x2="1" y2="1"><stop offset="0" stopColor="#35c1f1" /><stop offset="1" stopColor="#0f6ab4" /></linearGradient><linearGradient id="edB" x1="0" y1="0" x2="1" y2="1"><stop offset="0" stopColor="#35d07f" /><stop offset="1" stopColor="#1f9ed1" /></linearGradient></defs>
          <circle cx="12" cy="12" r="11" fill="url(#edA)" />
          <path d="M5 10C7 3 19 3 22 11c0 3-3 4-6 4 2-3-1-6-5-6-3 0-5 .5-6 1z" fill="url(#edB)" />
          <path d="M8 14c0 4 4 8 9 7-5 3-12 1-14-5 0-3 3-5 5-2z" fill="#114a8b" />
        </svg>
      </TB>
      <TB><svg width="24" height="24" viewBox="0 0 24 24"><path d="M1 3h9l2 3h11v15H1z" fill="#e8b33a" /><path d="M1 8h22v13H1z" fill="#f8d775" /><rect x="8" y="14" width="8" height="7" fill="#3aa0dc" /><rect x="10" y="17" width="4" height="4" fill="#f8d775" /></svg></TB>
      <TB><svg width="24" height="26" viewBox="0 0 24 26"><path d="M3 7h18v16a2 2 0 0 1-2 2H5a2 2 0 0 1-2-2z" fill="#f4f4f4" /><path d="M8 8V3a2 2 0 0 1 2-2h4a2 2 0 0 1 2 2v5" fill="none" stroke="#1aa0e8" strokeWidth="1.600" /><rect x="3" y="6" width="18" height="2" fill="#1aa0e8" /><rect x="8" y="11" width="3.500" height="3.500" fill="#f25022" /><rect x="12.500" y="11" width="3.500" height="3.500" fill="#7fba00" /><rect x="8" y="15.500" width="3.500" height="3.500" fill="#00a4ef" /><rect x="12.500" y="15.500" width="3.500" height="3.500" fill="#ffb900" /></svg></TB>
      <TB><svg width="26" height="24" viewBox="0 0 26 24"><path d="M1 9L13 0l12 9v15H1z" fill="#1592dc" /><path d="M1 9l12 9 12-9" fill="#36b3f0" /><path d="M1 9l12 8 12-8" stroke="#e8f6ff" strokeWidth="1" fill="none" /></svg></TB>
      <TB u><svg width="24" height="24" viewBox="0 0 24 24"><path d="M1 2h6l3 11 4-11h6l-6 19h-7z" fill="none" stroke="#e02b2b" strokeWidth="2.600" /><rect x="14" y="14" width="9" height="9" rx="1.500" fill="#e86a6a" /><path d="M17 21v-5h2.500a1.500 1.500 0 0 1 0 3H17" stroke="#fff" fill="none" /></svg></TB>
      <TB><svg width="26" height="26" viewBox="0 0 26 26"><rect x="0" y="0" width="21" height="14" fill="#3d4b4f" /><rect x="0" y="0" width="21" height="2" fill="#2f80c4" /><path d="M3 5h7M3 8h5" stroke="#8fb26a" /><path d="M14 6c-4 0-4 2-4 4h5v1H8c-3 0-3 6 0 6h2v-2c0-2 1-3 3-3h3c2 0 3-1 3-3V9c0-2-2-3-5-3z" fill="#3c78aa" /><path d="M14 24c4 0 4-2 4-4h-5v-1h7c3 0 3-6 0-6h-2v2c0 2-1 3-3 3h-3c-2 0-3 1-3 3v1c0 2 2 2 5 2z" fill="#fdd23c" /></svg></TB>
      <TB u><svg width="24" height="24" viewBox="0 0 24 24"><circle cx="12" cy="12" r="12" fill="#f7f7f7" /><rect x="5" y="10" width="8" height="2.500" rx="1.200" fill="#36c5f0" /><rect x="9.500" y="4.500" width="2.500" height="6" rx="1.200" fill="#36c5f0" /><rect x="13.500" y="5" width="2.500" height="8" rx="1.200" fill="#2eb67d" /><rect x="13.500" y="11" width="6" height="2.500" rx="1.200" fill="#2eb67d" /><rect x="11" y="14" width="8" height="2.500" rx="1.200" fill="#ecb22e" /><rect x="11.500" y="14" width="2.500" height="6" rx="1.200" fill="#ecb22e" /><rect x="7.500" y="11.500" width="2.500" height="8" rx="1.200" fill="#e01e5a" /><rect x="4.500" y="14" width="6" height="2.500" rx="1.200" fill="#e01e5a" /></svg></TB>
      <TB u><svg width="24" height="30" viewBox="0 0 24 30"><rect x="1" y="1" width="22" height="28" rx="7" fill="#4a8cff" /><rect x="5" y="10" width="10" height="10" rx="2" fill="#fff" /><path d="M16 14l4-3v8l-4-3z" fill="#fff" /></svg></TB>
      <div className="ml-[1px]"><TB u w="w-[48px]" bg="bg-[#4a6472]"><BlenderLogo s={24} /></TB></div>
    </div>
    <div className="ml-[129px] flex items-center">
      <svg width="20" height="20" viewBox="0 0 22 20"><circle cx="8" cy="7" r="5" fill="#f6c64a" /><path d="M4 18a4 4 0 0 1 0-8 5 5 0 0 1 9-1 4.500 4.500 0 0 1 4 9z" fill="#cfe4f4" /><rect x="17" y="0" width="2.200" height="9" fill="#e02020" /><rect x="17" y="10" width="2.200" height="2.200" fill="#e02020" /></svg>
      <span className="ml-[10px] text-[14px]">6°C</span>
    </div>
    <svg width="12" height="8" viewBox="0 0 12 8" className="ml-[17px]"><path d="M1 7l5-5 5 5" stroke="#fff" fill="none" strokeWidth="1.200" /></svg>
    <div className="ml-[10px] flex h-[18px] w-[16px] items-center justify-center rounded-[2px] bg-white"><svg width="14" height="12" viewBox="0 0 14 12"><path d="M3 11a2.500 2.500 0 0 1 0-5 4 4 0 0 1 7.500-1 3 3 0 0 1 .5 6z" fill="none" stroke="#2b7de9" strokeWidth="1.300" /></svg></div>
    <svg width="15" height="14" viewBox="0 0 15 14" className="ml-[8px]"><rect x="6" y="3" width="9" height="8" fill="none" stroke="#fff" /><rect x="8" y="5" width="5" height="4" fill="#fff" /><path d="M1 1v3M4 1v3M0 4h5v2c0 1-1 2-2.500 2S0 7 0 6zM2.500 8v5" stroke="#fff" /></svg>
    <svg width="15" height="14" viewBox="0 0 15 14" className="ml-[13px]"><path d="M1 13a12 12 0 0 1 12-12M4 13a9 9 0 0 1 9-9M7 13a6 6 0 0 1 6-6" stroke="#ddd" fill="none" strokeDasharray="1.500 1" /><rect x="11" y="11" width="2" height="2" fill="#fff" /></svg>
    <svg width="16" height="14" viewBox="0 0 16 14" className="ml-[7px]"><path d="M1 5h2l4-3v10l-4-3H1zM9.500 4.500c1 1.500 1 3.500 0 5M11.500 3c1.500 2.500 1.500 5.500 0 8M13.500 1.500c2 3 2 8 0 11" stroke="#fff" fill="none" /></svg>
    <div className="mt-[3px] w-[72px] text-center text-[12px] leading-[17px]"><div>16:08</div><div>18/02/2022</div></div>
    <svg width="16" height="16" viewBox="0 0 16 16" className="ml-[12px]"><path d="M1 1h14v11h-4l-3 3-3-3H1z" fill="none" stroke="#fff" strokeWidth="1.100" /></svg>
  </div>
);

export default function App() {
  const tabs = [["Layout","w-[52px]"],["Modeling","w-[63px]"],["Sculpting","w-[64px]"],["UV Editing","w-[70px]"],["Texture Paint","w-[83px]"],["Shading","w-[57px]"],["Animation","w-[69px]"],["Rendering","w-[68px]"],["Compositing","w-[80px]"],["Scripting","w-[62px]"]];
  return (
    <div className="h-[768px] w-[1366px] overflow-hidden bg-[#1c1c1c] font-['Noto_Sans',sans-serif] text-[11px]">
      <div className="flex h-[23px] items-center bg-white pl-[3px] font-['Open_Sans',sans-serif] text-[11.500px] text-[#111]">
        <BlenderLogo s={18} /><span className="ml-[2px]">Blender</span>
        <div className="flex-1" />
        <svg width="11" height="2" viewBox="0 0 11 2"><rect width="11" height="1" fill="#111" /></svg>
        <svg width="10" height="10" viewBox="0 0 10 10" className="ml-[34px]"><path d="M2.500 2.500V.5h7v7h-2M.5 2.500h7v7h-7z" stroke="#111" fill="none" /></svg>
        <svg width="11" height="11" viewBox="0 0 11 11" className="ml-[36px] mr-[19px]"><path d="M.5.5l10 10M10.500.5l-10 10" stroke="#111" /></svg>
      </div>
      <div className="flex h-[27px] items-end bg-[#1e1e1e] text-[#d8d8d8]">
        <div className="flex h-[27px] w-[36px] items-center justify-center pr-[2px]"><BlenderLogo s={18} c="#e8e8e8" mono /></div>
        <div className="flex h-[27px] items-center">
          <span className="w-[32px]">File</span><span className="w-[34px]">Edit</span><span className="w-[50px]">Render</span><span className="w-[55px]">Window</span><span className="w-[48px]">Help</span>
        </div>
        <div className="flex gap-[2px]">
          {tabs.map(([t, w], i) => (
            <div key={t} className={`flex h-[21px] items-center justify-center rounded-t-[4px] ${w} ${i === 0 ? "bg-[#3f3f3f] text-[#e8e8e8]" : "bg-[#2b2b2b] text-[#9c9c9c]"}`}>{t}</div>
          ))}
          <div className="flex h-[21px] w-[18px] items-center justify-center rounded-t-[4px] bg-[#2b2b2b]"><svg width="11" height="11" viewBox="0 0 11 11"><path d="M5.500 0v11M0 5.500h11" stroke="#a8a8a8" /></svg></div>
        </div>
        <div className="mb-[4px] ml-[8px] flex h-[19px] w-[191px] self-end overflow-hidden rounded-[4px] border border-[#383838] bg-[#282828]">
          <div className="flex w-[31px] items-center justify-center gap-[1px]"><I s={16} v={16}><path d="M5 1C3 4 1 6 1 9c0 2 2 3.500 4 3.500L7 4z" fill="#d8d8d8" /><circle cx="12" cy="3" r="2" fill="#d8d8d8" /><circle cx="10.500" cy="10.500" r="4" stroke="#d8d8d8" /></I><Chev /></div>
          <div className="flex w-[119px] items-center bg-[#1d1d1d] pl-[7px] text-[#e4e4e4]">Scene</div>
          <div className="flex w-[20px] items-center justify-center bg-[#545454]"><I s={14} v={14}><path d="M4 3V1h6l3 3v7h-3" stroke="#e6e6e6" /><rect x="1" y="3" width="9" height="10" stroke="#e6e6e6" /></I></div>
          <div className="flex flex-1 items-center justify-center"><svg width="9" height="9" viewBox="0 0 9 9"><path d="M.5.5l8 8M8.500.5l-8 8" stroke="#6e6e6e" /></svg></div>
        </div>
        <div className="mb-[4px] ml-[6px] flex h-[19px] w-[191px] self-end overflow-hidden rounded-[4px] border border-[#383838] bg-[#282828]">
          <div className="flex w-[31px] items-center justify-center gap-[1px]"><I s={15} v={15}><rect x="5" y="1" width="9" height="9" stroke="#dcdcdc" /><path d="M6.500 8.500l2-3 2 2 1-1 2 2z" fill="#dcdcdc" /><path d="M3 3v10h10M1 5v9.500h10" stroke="#dcdcdc" strokeWidth=".8" /></I><Chev /></div>
          <div className="flex w-[119px] items-center bg-[#1d1d1d] pl-[7px] text-[#e4e4e4]">View Layer</div>
          <div className="flex w-[20px] items-center justify-center bg-[#545454]"><I s={14} v={14}><path d="M4 3V1h6l3 3v7h-3" stroke="#e6e6e6" /><rect x="1" y="3" width="9" height="10" stroke="#e6e6e6" /></I></div>
          <div className="flex flex-1 items-center justify-center"><svg width="9" height="9" viewBox="0 0 9 9"><path d="M.5.5l8 8M8.500.5l-8 8" stroke="#6e6e6e" /></svg></div>
        </div>
      </div>
      <div className="flex h-[658px]">
        <div className="w-[1128px]"><Viewport /><Timeline /></div>
        <div className="ml-[2px] w-[236px]"><Outliner /><Properties /></div>
      </div>
      <Status />
      <Taskbar />
    </div>
  );
}
